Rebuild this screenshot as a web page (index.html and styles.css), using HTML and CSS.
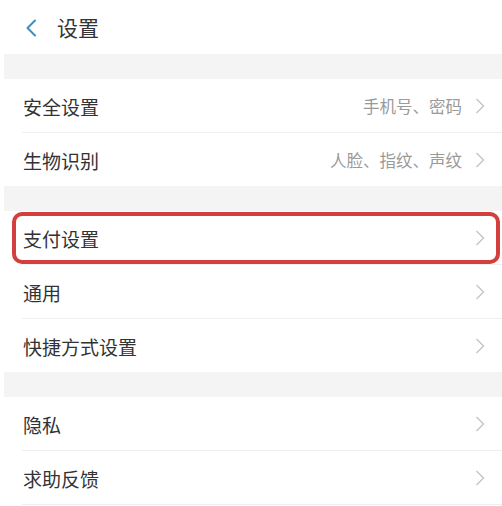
FILE: index.html
```html
<!DOCTYPE html>
<html lang="zh-CN">
<head>
<meta charset="utf-8">
<title>设置</title>
<link rel="stylesheet" href="styles.css">
</head>
<body>
<div class="page">
  <header class="header">
    <svg class="back" width="12" height="18" viewBox="0 0 12 18"><polyline points="10,1.5 2.5,9 10,16.5" fill="none" stroke="#3b8cc4" stroke-width="2" stroke-linecap="round" stroke-linejoin="round"/></svg>
    <span class="title">设置</span>
  </header>

  <div class="band"></div>
  <div class="group">
    <div class="row"><span class="label">安全设置</span><span class="value">手机号、密码</span><svg class="arrow" width="10" height="16" viewBox="0 0 10 16"><polyline points="1.5,1 8.5,8 1.5,15" fill="none" stroke="#c4c4c4" stroke-width="1.4"/></svg></div>
    <div class="row"><span class="label">生物识别</span><span class="value">人脸、指纹、声纹</span><svg class="arrow" width="10" height="16" viewBox="0 0 10 16"><polyline points="1.5,1 8.5,8 1.5,15" fill="none" stroke="#c4c4c4" stroke-width="1.4"/></svg></div>
  </div>

  <div class="band"></div>
  <div class="group">
    <div class="row highlighted"><span class="label">支付设置</span><span class="value"></span><svg class="arrow" width="10" height="16" viewBox="0 0 10 16"><polyline points="1.5,1 8.5,8 1.5,15" fill="none" stroke="#c4c4c4" stroke-width="1.4"/></svg><span class="mark"></span></div>
    <div class="row"><span class="label">通用</span><span class="value"></span><svg class="arrow" width="10" height="16" viewBox="0 0 10 16"><polyline points="1.5,1 8.5,8 1.5,15" fill="none" stroke="#c4c4c4" stroke-width="1.4"/></svg></div>
    <div class="row"><span class="label">快捷方式设置</span><span class="value"></span><svg class="arrow" width="10" height="16" viewBox="0 0 10 16"><polyline points="1.5,1 8.5,8 1.5,15" fill="none" stroke="#c4c4c4" stroke-width="1.4"/></svg></div>
  </div>

  <div class="band"></div>
  <div class="group">
    <div class="row"><span class="label">隐私</span><span class="value"></span><svg class="arrow" width="10" height="16" viewBox="0 0 10 16"><polyline points="1.5,1 8.5,8 1.5,15" fill="none" stroke="#c4c4c4" stroke-width="1.4"/></svg></div>
    <div class="row last-line"><span class="label">求助反馈</span><span class="value"></span><svg class="arrow" width="10" height="16" viewBox="0 0 10 16"><polyline points="1.5,1 8.5,8 1.5,15" fill="none" stroke="#c4c4c4" stroke-width="1.4"/></svg></div>
  </div>
</div>
</body>
</html>
```

FILE: styles.css
```css
html, body {
  margin: 0;
  padding: 0;
  background: #ffffff;
}

.page {
  width: 502px;
  height: 506px;
  overflow: hidden;
  font-family: "Noto Sans CJK SC", "Noto Sans", sans-serif;
  color: #333333;
}

.header {
  height: 54px;
  display: flex;
  align-items: center;
  padding-left: 25px;
  box-sizing: border-box;
}

.back {
  display: block;
  margin-top: 1px;
}

.title {
  margin-left: 20px;
  font-size: 21px;
  line-height: 26px;
  color: #333333;
}

.band {
  height: 25px;
  margin-left: 4px;
  background: #f4f4f4;
}

.group {
  display: flex;
  flex-direction: column;
}

.row {
  position: relative;
  height: 53px;
  display: flex;
  align-items: center;
  padding-left: 23px;
  padding-right: 17px;
}

.row + .row::before,
.last-line::after {
  content: "";
  position: absolute;
  left: 22px;
  right: 0;
  top: -1px;
  height: 1px;
  background: #efefef;
}

.row + .row {
  margin-top: 1px;
}

.last-line::after {
  top: auto;
  bottom: -1px;
}

.label {
  font-size: 19px;
  line-height: 24px;
  color: #333333;
  margin-top: 2px;
}

.value {
  flex: 1;
  text-align: right;
  font-size: 16.5px;
  line-height: 22px;
  color: #9a9a9a;
  margin-right: 13px;
  margin-top: 1px;
}

.arrow {
  display: block;
  margin-top: 1px;
}

.mark {
  position: absolute;
  left: 12px;
  right: 2px;
  top: 1px;
  bottom: 0px;
  border: 4px solid #d23f3d;
  border-radius: 10px;
}
```
